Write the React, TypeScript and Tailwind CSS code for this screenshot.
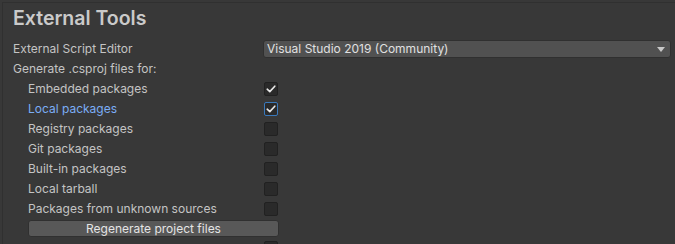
import React from "react";

const rows: { label: string; checked: boolean; focused?: boolean }[] = [
  { label: "Embedded packages", checked: true },
  { label: "Local packages", checked: true, focused: true },
  { label: "Registry packages", checked: false },
  { label: "Git packages", checked: false },
  { label: "Built-in packages", checked: false },
  { label: "Local tarball", checked: false },
  { label: "Packages from unknown sources", checked: false },
];

function Check() {
  return (
    <svg width="10" height="8" viewBox="0 0 10 8" fill="none">
      <path d="M1.2 4.2 L3.8 6.6 L8.8 1.2" stroke="#e8e8e8" strokeWidth="1.6" strokeLinecap="round" strokeLinejoin="round" />
    </svg>
  );
}

function Box({ checked, focused }: { checked: boolean; focused?: boolean }) {
  return (
    <div
      className={
        "w-[14px] h-[14px] rounded-[2px] flex items-center justify-center bg-[#2a2a2a] border " +
        (focused ? "border-[#3a79bb]" : "border-[#212121]")
      }
    >
      {checked ? <Check /> : null}
    </div>
  );
}

export default function App() {
  return (
    <div
      className="w-[675px] h-[244px] bg-[#383838] overflow-hidden text-[#c4c4c4]"
      style={{ fontFamily: "Inter, 'Noto Sans', sans-serif" }}
    >
      <div className="ml-[2px] mt-[2px] h-[242px] border-l border-t border-[#303030] pl-[10px] pr-[4px]">
        <div className="pt-[3px] h-[28px] text-[19.5px] font-semibold leading-[24px] text-[#cacaca]">External Tools</div>
        <div className="mt-[8px] h-[20px] flex items-center text-[12px]">
          <div className="w-[250px]">External Script Editor</div>
          <div className="flex-1 h-[18px] rounded-[3px] bg-[#515151] border border-[#303030] flex items-center justify-between pl-[3px] pr-[5px] text-[#e0e0e0]">
            <span>Visual Studio 2019 (Community)</span>
            <svg width="8" height="5" viewBox="0 0 8 5">
              <path d="M0 0 L8 0 L4 5 Z" fill="#c8c8c8" />
            </svg>
          </div>
        </div>
        <div className="h-[20px] flex items-center text-[12px]">Generate .csproj files for:</div>
        {rows.map((r) => (
          <div key={r.label} className="h-[20px] flex items-center text-[12px]">
            <div className={"pl-[15px] w-[251px] " + (r.focused ? "text-[#7badf5]" : "")}>{r.label}</div>
            <Box checked={r.checked} focused={r.focused} />
          </div>
        ))}
        <div className="pl-[15px] mt-[1px] flex">
          <div className="w-[251px] h-[17px] rounded-[3px] bg-[#585858] border border-[#303030] flex items-center justify-center text-[12px] text-[#e4e4e4]">
            Regenerate project files
          </div>
        </div>
        <div className="pl-[251px] mt-[4px]">
          <Box checked={false} />
        </div>
      </div>
    </div>
  );
}
